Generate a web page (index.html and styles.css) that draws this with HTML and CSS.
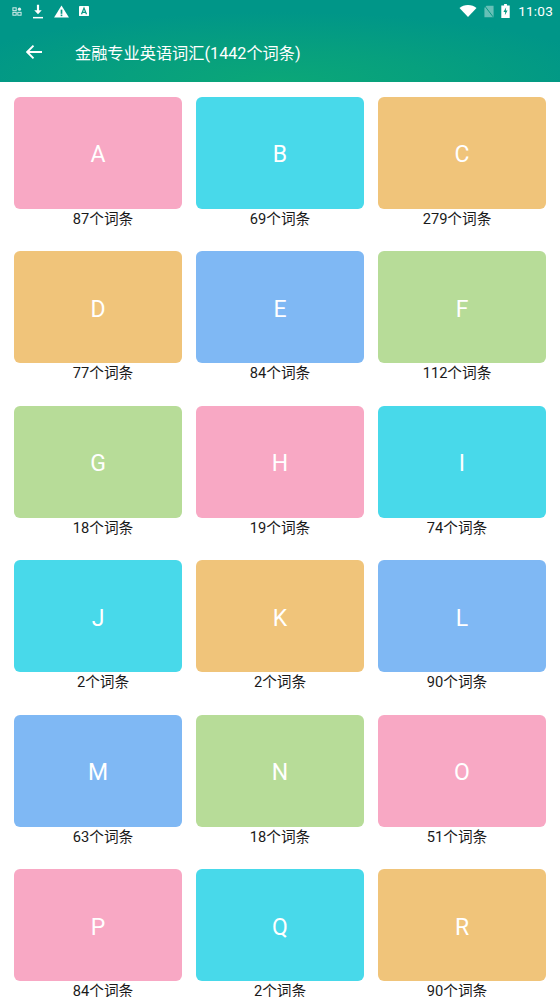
FILE: index.html
```html
<!DOCTYPE html>
<html lang="zh">
<head>
<meta charset="utf-8">
<title>金融专业英语词汇</title>
<link rel="stylesheet" href="styles.css">
</head>
<body>
<header class="appbar">
  <div class="status">
    <div class="status-left">
      <svg class="ic" width="10" height="9" viewBox="0 0 12 11" fill="none" stroke="#fff" stroke-width="1.200" opacity=".85"><rect x="1" y="1" width="4" height="3.500"/><rect x="1" y="6.500" width="4" height="3.500"/><rect x="7" y="6.500" width="4" height="3.500"/><circle cx="9" cy="2.700" r="2" fill="#fff" stroke="none"/></svg>
      <svg class="ic" width="12" height="15" viewBox="0 0 14 18" fill="#fff"><path d="M5.700 1h2.600v6.500h3.200L7 12.200 2.500 7.500h3.200z"/><rect x="1" y="15.500" width="12" height="1.800"/></svg>
      <svg class="ic" width="15" height="13" viewBox="0 0 16 14"><path d="M8 0.500 16 13.500H0z" fill="#fff"/><rect x="7.100" y="5" width="1.800" height="4.500" fill="#089985"/><rect x="7.100" y="10.300" width="1.800" height="1.700" fill="#089985"/></svg>
      <svg class="ic" width="10" height="10" viewBox="0 0 12 12"><rect x="0" y="0" width="12" height="12" rx="1" fill="#fff"/><path d="M3 10 6 2.500 9 10M4.100 7.500h3.800" fill="none" stroke="#089985" stroke-width="1.500"/></svg>
    </div>
    <div class="status-right">
      <svg class="ic" width="18" height="12" viewBox="0 0 17 12" fill="#fff"><path d="M0 3C2.200 1.100 5.100 0 8.500 0s6.300 1.100 8.500 3L8.500 12z"/></svg>
      <svg class="ic" width="10" height="13" viewBox="0 0 12 15"><path d="M3 .5h8.500v14H.5V3z" fill="#fff" opacity=".4"/><path d="M1 1l10 13" stroke="#089985" stroke-width="1.200"/></svg>
      <svg class="ic" width="9" height="14" viewBox="0 0 9 15"><path d="M3 0h3v1.500h3V15H0V1.500h3z" fill="#fff"/><path d="M5.200 3.500 2.300 8.500h1.900l-.4 3.500 2.900-5H4.800z" fill="#089985"/></svg>
      <span class="clock">11:03</span>
    </div>
  </div>
  <div class="toolbar">
    <svg class="back" width="16" height="14" viewBox="0 0 16 14" fill="none" stroke="#fff" stroke-width="1.900"><path d="M16 7H1.500M7.500.7 1.200 7l6.300 6.300"/></svg>
    <h1 class="title">金融专业英语词汇(1442个词条)</h1>
  </div>
</header>
<main class="grid">
  <section class="item"><div class="card pink">A</div><p class="count">87个词条</p></section>
  <section class="item"><div class="card cyan">B</div><p class="count">69个词条</p></section>
  <section class="item"><div class="card amber">C</div><p class="count">279个词条</p></section>
  <section class="item"><div class="card amber">D</div><p class="count">77个词条</p></section>
  <section class="item"><div class="card blue">E</div><p class="count">84个词条</p></section>
  <section class="item"><div class="card green">F</div><p class="count">112个词条</p></section>
  <section class="item"><div class="card green">G</div><p class="count">18个词条</p></section>
  <section class="item"><div class="card pink">H</div><p class="count">19个词条</p></section>
  <section class="item"><div class="card cyan">I</div><p class="count">74个词条</p></section>
  <section class="item"><div class="card cyan">J</div><p class="count">2个词条</p></section>
  <section class="item"><div class="card amber">K</div><p class="count">2个词条</p></section>
  <section class="item"><div class="card blue">L</div><p class="count">90个词条</p></section>
  <section class="item"><div class="card blue">M</div><p class="count">63个词条</p></section>
  <section class="item"><div class="card green">N</div><p class="count">18个词条</p></section>
  <section class="item"><div class="card pink">O</div><p class="count">51个词条</p></section>
  <section class="item"><div class="card pink">P</div><p class="count">84个词条</p></section>
  <section class="item"><div class="card cyan">Q</div><p class="count">2个词条</p></section>
  <section class="item"><div class="card amber">R</div><p class="count">90个词条</p></section>
</main>
</body>
</html>
```
FILE: styles.css
```css
html, body {
  margin: 0;
  height: 997px;
  overflow: hidden;
  background: #fff;
  font-family: Roboto, "Noto Sans CJK SC", sans-serif;
}
.appbar {
  height: 82px;
  background: radial-gradient(ellipse 340px 70px at 50% 100%, #0ba778 0%, #07a07e 45%, #009688 100%);
  color: #fff;
  display: flex;
  flex-direction: column;
}
.status {
  height: 22px;
  padding: 0 7px 0 12px;
  display: flex;
  justify-content: space-between;
  align-items: center;
}
.status-left, .status-right {
  display: flex;
  align-items: center;
}
.status-left { gap: 10px; }
.status-right { gap: 7px; }
.ic { display: block; flex: none; }
.clock {
  margin-left: 1px;
  font-size: 13.600px;
  letter-spacing: .2px;
}
.toolbar {
  flex: 1;
  display: flex;
  align-items: center;
  padding: 0 0 0 26px;
}
.back { flex: none; }
.title {
  margin: 0 0 0 33px;
  font-size: 16.200px;
  font-weight: 400;
  white-space: nowrap;
}
.grid {
  display: grid;
  grid-template-columns: repeat(3, 168px);
  column-gap: 14px;
  row-gap: 21px;
  padding: 14.600px 14px 0;
}
.item { text-align: center; }
.card {
  height: 108px;
  padding-top: 4px;
  border-radius: 6px;
  display: flex;
  align-items: center;
  justify-content: center;
  color: #fff;
  font-size: 23px;
}
.count {
  margin: 0;
  height: 21.500px;
  line-height: 21.500px;
  font-size: 14.670px;
  color: #1a1a1a;
}
.item:nth-child(3n+1) .count { padding-left: 10px; }
.item:nth-child(3n) .count { padding-right: 10px; }
.pink { background: #f8a8c4; }
.cyan { background: #48d9ea; }
.amber { background: #f0c47a; }
.blue { background: #7fb8f4; }
.green { background: #b7dc98; }
```
